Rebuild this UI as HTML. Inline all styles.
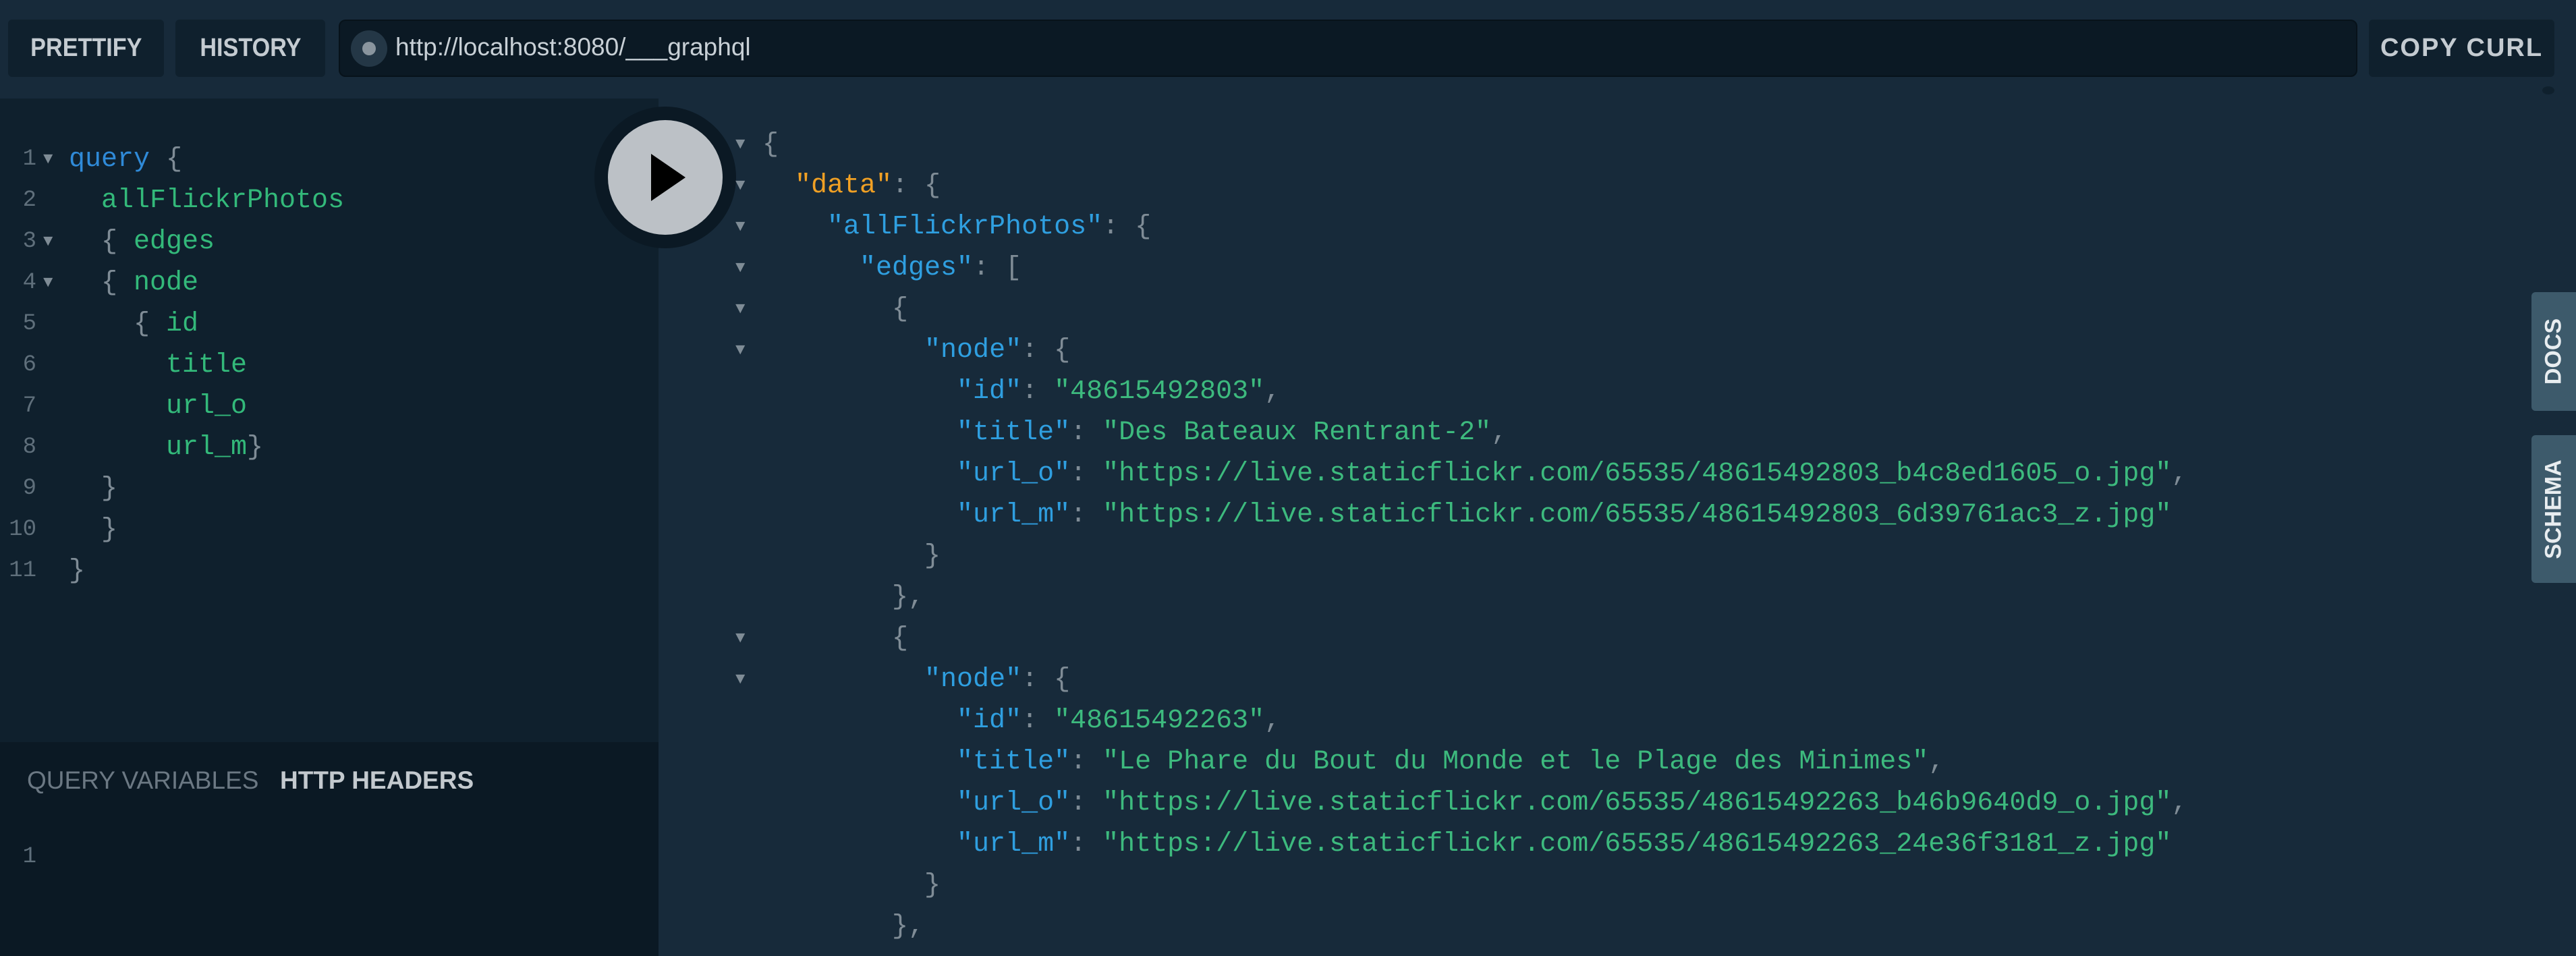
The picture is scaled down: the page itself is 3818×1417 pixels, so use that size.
<!DOCTYPE html>
<html><head><meta charset="utf-8"><style>
*{margin:0;padding:0;box-sizing:border-box}
body{width:3818px;height:1417px;overflow:hidden;background:#172a3a;position:relative;font-family:"Liberation Sans",sans-serif}
.btn{position:absolute;top:29px;height:85px;background:#0f202d;border-radius:6px;color:#c4cbd1;font-weight:bold;font-size:38px;display:flex;align-items:center;justify-content:center}
.btn b{display:inline-block;transform:scaleX(0.9)}
.url{position:absolute;left:502px;top:29px;width:2992px;height:85px;background:#0b1924;border:2px solid #07121a;border-radius:10px}
.url .c{position:absolute;left:16px;top:14px;width:54px;height:54px;border-radius:50%;background:#243746}
.url .c:after{content:"";position:absolute;left:17px;top:17px;width:20px;height:20px;border-radius:50%;background:#8a959e}
.url span{position:absolute;left:82px;top:18px;font-size:37px;color:#c8d0d6}
.left{position:absolute;left:0;top:146px;width:976px;height:954px;background:#0f202d}
.vars{position:absolute;left:0;top:1100px;width:976px;height:317px;background:#0b1924}
.mono{font-family:"Liberation Mono",monospace;font-size:40px;white-space:pre;position:absolute;line-height:61px}
.ln{color:#5f6f7b;text-align:right;width:54px;left:0;font-size:34px}
.ar{color:#7f8c96;font-size:24px}
.p{color:#7f8c96}.b{color:#2f8ad8}.g{color:#33b97a}.k{color:#2f9fe0}.o{color:#f0a024}.s{color:#3dba7e}
.play{position:absolute;left:881px;top:158px;width:210px;height:210px;border-radius:50%;background:#0b1924}
.play .in{position:absolute;left:20px;top:20px;width:170px;height:170px;border-radius:50%;background:#bcc1c6}
.tab{position:absolute;left:3752px;width:66px;background:#3d5a6b;border-radius:6px 0 0 6px;color:#e8edf0;font-weight:bold;font-size:34px}
.tab span{position:absolute;left:50%;top:50%;transform:translate(-50%,-50%) rotate(-90deg);white-space:nowrap}
</style></head><body>
<div class="btn" style="left:12px;width:231px"><b>PRETTIFY</b></div>
<div class="btn" style="left:260px;width:222px"><b>HISTORY</b></div>
<div class="url"><div class="c"></div><span>http://localhost:8080/___graphql</span></div>
<div class="btn" style="left:3511px;width:275px;letter-spacing:2px">COPY CURL</div>
<div style="position:absolute;left:3768px;top:128px;width:18px;height:12px;border-radius:50%;background:#0f202d"></div>

<div class="left"></div>
<div class="vars"></div>
<div style="position:absolute;left:40px;top:1136px;font-size:37px;color:#6b7883">QUERY VARIABLES</div>
<div style="position:absolute;left:415px;top:1136px;font-size:37px;font-weight:bold;color:#c3c9ce">HTTP HEADERS</div>
<div class="mono ln" style="top:1240px">1</div>

<div class="mono ln" style="top:206px">1</div><div class="mono ar" style="left:64px;top:206px">▼</div><div class="mono" style="left:102px;top:206px"><span class="b">query</span> <span class="p">{</span></div>
<div class="mono ln" style="top:267px">2</div><div class="mono g" style="left:102px;top:267px">  allFlickrPhotos</div>
<div class="mono ln" style="top:328px">3</div><div class="mono ar" style="left:64px;top:328px">▼</div><div class="mono" style="left:102px;top:328px">  <span class="p">{</span> <span class="g">edges</span></div>
<div class="mono ln" style="top:389px">4</div><div class="mono ar" style="left:64px;top:389px">▼</div><div class="mono" style="left:102px;top:389px">  <span class="p">{</span> <span class="g">node</span></div>
<div class="mono ln" style="top:450px">5</div><div class="mono" style="left:102px;top:450px">    <span class="p">{</span> <span class="g">id</span></div>
<div class="mono ln" style="top:511px">6</div><div class="mono g" style="left:102px;top:511px">      title</div>
<div class="mono ln" style="top:572px">7</div><div class="mono g" style="left:102px;top:572px">      url_o</div>
<div class="mono ln" style="top:633px">8</div><div class="mono g" style="left:102px;top:633px">      url_m<span class="p">}</span></div>
<div class="mono ln" style="top:694px">9</div><div class="mono p" style="left:102px;top:694px">  }</div>
<div class="mono ln" style="top:755px">10</div><div class="mono p" style="left:102px;top:755px">  }</div>
<div class="mono ln" style="top:816px">11</div><div class="mono p" style="left:102px;top:816px">}</div>

<div class="play"><div class="in"><svg width="170" height="170" viewBox="0 0 170 170"><path d="M64 50 L64 120 L115 85 Z" fill="#000"/></svg></div></div>

<div class="mono ar" style="left:1090px;top:184px">▼</div>
<div class="mono ar" style="left:1090px;top:245px">▼</div>
<div class="mono ar" style="left:1090px;top:306px">▼</div>
<div class="mono ar" style="left:1090px;top:367px">▼</div>
<div class="mono ar" style="left:1090px;top:428px">▼</div>
<div class="mono ar" style="left:1090px;top:489px">▼</div>
<div class="mono ar" style="left:1090px;top:916px">▼</div>
<div class="mono ar" style="left:1090px;top:977px">▼</div>
<div class="mono" style="left:1130px;top:184px"><span class="p">{</span>
  <span class="o">"data"</span><span class="p">: {</span>
    <span class="k">"allFlickrPhotos"</span><span class="p">: {</span>
      <span class="k">"edges"</span><span class="p">: [</span>
<span class="p">        {</span>
          <span class="k">"node"</span><span class="p">: {</span>
            <span class="k">"id"</span><span class="p">: </span><span class="s">"48615492803"</span><span class="p">,</span>
            <span class="k">"title"</span><span class="p">: </span><span class="s">"Des Bateaux Rentrant-2"</span><span class="p">,</span>
            <span class="k">"url_o"</span><span class="p">: </span><span class="s">"https://live.staticflickr.com/65535/48615492803_b4c8ed1605_o.jpg"</span><span class="p">,</span>
            <span class="k">"url_m"</span><span class="p">: </span><span class="s">"https://live.staticflickr.com/65535/48615492803_6d39761ac3_z.jpg"</span>
<span class="p">          }</span>
<span class="p">        },</span>
<span class="p">        {</span>
          <span class="k">"node"</span><span class="p">: {</span>
            <span class="k">"id"</span><span class="p">: </span><span class="s">"48615492263"</span><span class="p">,</span>
            <span class="k">"title"</span><span class="p">: </span><span class="s">"Le Phare du Bout du Monde et le Plage des Minimes"</span><span class="p">,</span>
            <span class="k">"url_o"</span><span class="p">: </span><span class="s">"https://live.staticflickr.com/65535/48615492263_b46b9640d9_o.jpg"</span><span class="p">,</span>
            <span class="k">"url_m"</span><span class="p">: </span><span class="s">"https://live.staticflickr.com/65535/48615492263_24e36f3181_z.jpg"</span>
<span class="p">          }</span>
<span class="p">        },</span></div>

<div class="tab" style="top:433px;height:176px"><span>DOCS</span></div>
<div class="tab" style="top:645px;height:219px"><span>SCHEMA</span></div>
</body></html>
